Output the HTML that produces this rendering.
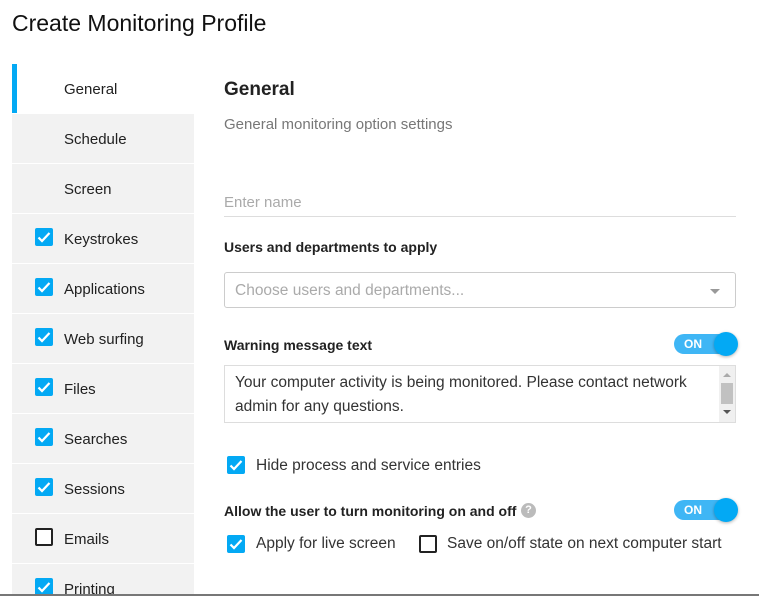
<!DOCTYPE html>
<html><head><meta charset="utf-8"><style>
*{box-sizing:border-box;margin:0;padding:0}
html{width:759px;height:596px;overflow:hidden}
body{width:759px;height:596px;overflow:hidden;background:#fff;font-family:"Liberation Sans",Arial,sans-serif;color:#212121;position:relative}
.a{position:absolute}
h1{position:absolute;left:12px;top:10px;font-size:23px;font-weight:normal;color:#111}
.side{position:absolute;left:12px;top:64px;width:182px;height:532px;overflow:hidden}
.it{height:50px;background:#f2f2f2;border-bottom:1px solid #fff;position:relative;font-size:15px;line-height:51px;padding-left:52px}
.it.sel{background:#fff}
.it.sel:before{content:"";position:absolute;left:0;top:0;width:5px;height:49px;background:#03a9f4}
.cb{position:absolute;width:18px;height:18px;border-radius:2px;background:#03a9f4}
.cb svg{position:absolute;left:2px;top:3px}
.cb.off{background:#fff;border:2px solid #222}
.it .cb{left:23px;top:14px}
.tg{position:absolute;width:64px;height:24px}
.tg .tr{position:absolute;left:0;top:2px;width:56px;height:20px;border-radius:10px;background:#3fb6f5;color:#fff;font-size:12px;font-weight:bold;line-height:20px;padding-left:10px}
.tg .th{position:absolute;left:40px;top:0;width:24px;height:24px;border-radius:50%;background:#03a9f4;box-shadow:0 1px 3px rgba(0,0,0,.3)}
</style></head><body>
<h1>Create Monitoring Profile</h1>
<div class="side">
<div class="it sel">General</div>
<div class="it">Schedule</div>
<div class="it">Screen</div>
<div class="it"><span class="cb"><svg width="14" height="12"><path d="M1.5 6.5l3.5 3.5 7.5-8" stroke="#fff" stroke-width="2.2" fill="none"/></svg></span>Keystrokes</div>
<div class="it"><span class="cb"><svg width="14" height="12"><path d="M1.5 6.5l3.5 3.5 7.5-8" stroke="#fff" stroke-width="2.2" fill="none"/></svg></span>Applications</div>
<div class="it"><span class="cb"><svg width="14" height="12"><path d="M1.5 6.5l3.5 3.5 7.5-8" stroke="#fff" stroke-width="2.2" fill="none"/></svg></span>Web surfing</div>
<div class="it"><span class="cb"><svg width="14" height="12"><path d="M1.5 6.5l3.5 3.5 7.5-8" stroke="#fff" stroke-width="2.2" fill="none"/></svg></span>Files</div>
<div class="it"><span class="cb"><svg width="14" height="12"><path d="M1.5 6.5l3.5 3.5 7.5-8" stroke="#fff" stroke-width="2.2" fill="none"/></svg></span>Searches</div>
<div class="it"><span class="cb"><svg width="14" height="12"><path d="M1.5 6.5l3.5 3.5 7.5-8" stroke="#fff" stroke-width="2.2" fill="none"/></svg></span>Sessions</div>
<div class="it"><span class="cb off"></span>Emails</div>
<div class="it"><span class="cb"><svg width="14" height="12"><path d="M1.5 6.5l3.5 3.5 7.5-8" stroke="#fff" stroke-width="2.2" fill="none"/></svg></span>Printing</div>
</div>
<div class="a" style="left:224px;top:79px;font-size:19px;font-weight:bold;color:#222">General</div>
<div class="a" style="left:224px;top:116px;font-size:15px;color:#777">General monitoring option settings</div>
<div class="a" style="left:224px;top:194px;font-size:15px;color:#aaa">Enter name</div>
<div class="a" style="left:224px;top:216px;width:512px;height:1px;background:#ddd"></div>
<div class="a" style="left:224px;top:239px;font-size:14px;font-weight:bold;color:#222">Users and departments to apply</div>
<div class="a" style="left:224px;top:272px;width:512px;height:36px;border:1px solid #ccc;border-radius:3px"></div>
<div class="a" style="left:235px;top:282px;font-size:15.5px;color:#aaa">Choose users and departments...</div>
<div class="a" style="left:710px;top:289px;border-left:5px solid transparent;border-right:5px solid transparent;border-top:5px solid #999"></div>
<div class="a" style="left:224px;top:337px;font-size:14px;font-weight:bold;color:#222">Warning message text</div>
<div class="tg" style="left:674px;top:332px"><div class="tr">ON</div><div class="th"></div></div>
<div class="a" style="left:224px;top:365px;width:512px;height:58px;border:1px solid #ddd"></div>
<div class="a" style="left:235px;top:371px;font-size:15.5px;line-height:24px;color:#333;width:480px">Your computer activity is being monitored. Please contact network admin for any questions.</div>
<div class="a" style="left:719px;top:366px;width:16px;height:56px;background:#f0f0f0"></div>
<div class="a" style="left:723px;top:373px;border-left:4px solid transparent;border-right:4px solid transparent;border-bottom:4px solid #aaa"></div>
<div class="a" style="left:721px;top:383px;width:12px;height:21px;background:#c1c1c1"></div>
<div class="a" style="left:723px;top:410px;border-left:4px solid transparent;border-right:4px solid transparent;border-top:4px solid #555"></div>
<span class="cb" style="left:227px;top:456px"><svg width="14" height="12"><path d="M1.5 6.5l3.5 3.5 7.5-8" stroke="#fff" stroke-width="2.2" fill="none"/></svg></span>
<div class="a" style="left:256px;top:457px;font-size:15.5px;color:#333">Hide process and service entries</div>
<div class="a" style="left:224px;top:503px;font-size:14px;font-weight:bold;color:#222">Allow the user to turn monitoring on and off</div>
<div class="a" style="left:521px;top:503px;width:15px;height:15px;border-radius:50%;background:#bbb;color:#fff;font-size:11px;font-weight:bold;text-align:center;line-height:15px">?</div>
<div class="tg" style="left:674px;top:498px"><div class="tr">ON</div><div class="th"></div></div>
<span class="cb" style="left:227px;top:535px"><svg width="14" height="12"><path d="M1.5 6.5l3.5 3.5 7.5-8" stroke="#fff" stroke-width="2.2" fill="none"/></svg></span>
<div class="a" style="left:256px;top:535px;font-size:15.5px;color:#333">Apply for live screen</div>
<span class="cb off" style="left:419px;top:535px"></span>
<div class="a" style="left:447px;top:535px;font-size:15.5px;color:#333">Save on/off state on next computer start</div>
<div class="a" style="left:0;top:594px;width:759px;height:2px;background:#777"></div>
</body></html>
